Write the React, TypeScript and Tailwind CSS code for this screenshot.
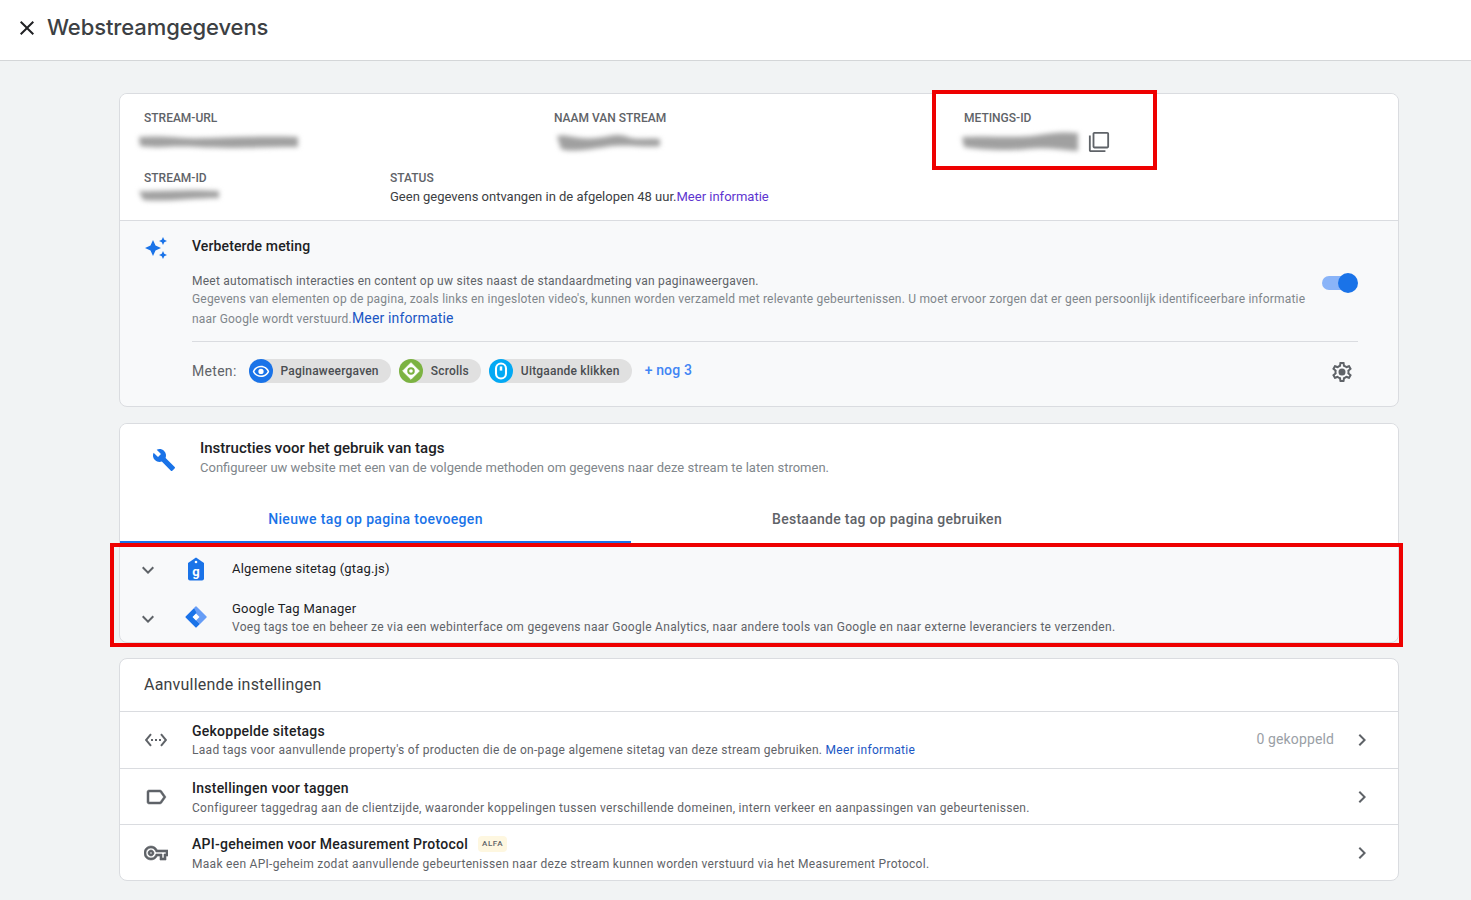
import React from "react";

const P = ({ d, className }: { d: string; className?: string }) => (
  <svg viewBox="0 0 24 24" className={className} fill="currentColor"><path d={d} /></svg>
);

const ICON = {
  close: "M19 6.41L17.59 5 12 10.59 6.41 5 5 6.41 10.59 12 5 17.59 6.41 19 12 13.41 17.59 19 19 17.59 13.41 12z",
  copy: "M3 5H1v16c0 1.1.9 2 2 2h16v-2H3V5zm18-4H7c-1.1 0-2 .9-2 2v14c0 1.1.9 2 2 2h14c1.1 0 2-.9 2-2V3c0-1.1-.9-2-2-2zm0 16H7V3h14v14z",
  wrench: "M22.7 19l-9.1-9.1c.9-2.3.4-5-1.5-6.9-2-2-5-2.4-7.4-1.3L9 6 6 9 1.6 4.7C.4 7.1.9 10.1 2.9 12.1c1.9 1.9 4.6 2.4 6.9 1.5l9.1 9.1c.4.4 1 .4 1.4 0l2.3-2.3c.5-.4.5-1.1.1-1.4z",
  sparkle: "M19 9l1.25-2.75L23 5l-2.75-1.25L19 1l-1.25 2.75L15 5l2.75 1.25L19 9zm-7.5.5L9 4 6.5 9.5 1 12l5.5 2.5L9 20l2.5-5.5L17 12l-5.5-2.5zM19 15l-1.25 2.75L15 19l2.75 1.25L19 23l1.25-2.75L23 19l-2.75-1.25L19 15z",
  gear: "M19.43 12.98c.04-.32.07-.64.07-.98 0-.34-.03-.66-.07-.98l2.11-1.65c.19-.15.24-.42.12-.64l-2-3.46c-.09-.16-.26-.25-.44-.25-.06 0-.12.01-.17.03l-2.49 1c-.52-.4-1.08-.73-1.69-.98l-.38-2.65C14.46 2.18 14.25 2 14 2h-4c-.25 0-.46.18-.49.42l-.38 2.65c-.61.25-1.17.59-1.69.98l-2.49-1c-.06-.02-.12-.03-.18-.03-.17 0-.34.09-.43.25l-2 3.46c-.13.22-.07.49.12.64l2.11 1.65c-.04.32-.07.65-.07.98 0 .33.03.66.07.98l-2.11 1.65c-.19.15-.24.42-.12.64l2 3.46c.09.16.26.25.44.25.06 0 .12-.01.17-.03l2.49-1c.52.4 1.08.73 1.69.98l.38 2.65c.03.24.24.42.49.42h4c.25 0 .46-.18.49-.42l.38-2.65c.61-.25 1.17-.59 1.69-.98l2.49 1c.06.02.12.03.18.03.17 0 .34-.09.43-.25l2-3.46c.12-.22.07-.49-.12-.64l-2.11-1.65zm-1.98-1.71c.04.31.05.52.05.73 0 .21-.02.43-.05.73l-.14 1.13.89.7 1.08.84-.7 1.21-1.27-.51-1.04-.42-.9.68c-.43.32-.84.56-1.25.73l-1.06.43-.16 1.13-.2 1.35h-1.4l-.19-1.35-.16-1.13-1.06-.43c-.43-.18-.83-.41-1.23-.71l-.91-.7-1.06.43-1.27.51-.7-1.21 1.08-.84.89-.7-.14-1.13c-.03-.31-.05-.54-.05-.74s.02-.43.05-.73l.14-1.13-.89-.7-1.08-.84.7-1.21 1.27.51 1.04.42.9-.68c.43-.32.84-.56 1.25-.73l1.06-.43.16-1.13.2-1.35h1.39l.19 1.35.16 1.13 1.06.43c.43.18.83.41 1.23.71l.91.7 1.06-.43 1.27-.51.7 1.21-1.07.85-.89.7.14 1.13zM12 8.500A3.500 3.500 0 1 0 12 15.500A3.500 3.500 0 0 0 12 8.500z",
  code: "M7.77 6.76L6.23 5.48.82 12l5.41 6.52 1.54-1.28L3.42 12l4.35-5.24zM7 13h2v-2H7v2zm10-2h-2v2h2v-2zm-6 2h2v-2h-2v2zm6.77-7.52l-1.54 1.28L20.58 12l-4.35 5.24 1.54 1.28L23.18 12l-5.41-6.52z",
  label: "M17.63 5.84C17.27 5.33 16.67 5 16 5L5 5.01C3.9 5.01 3 5.9 3 7v10c0 1.1.9 1.99 2 1.99L16 19c.67 0 1.27-.33 1.63-.84L22 12l-4.37-6.16zM16 17H5V7h11l3.55 5L16 17z",
  key: "M22 19h-6v-4h-2.68c-1.14 2.42-3.6 4-6.32 4-3.86 0-7-3.14-7-7s3.14-7 7-7c2.72 0 5.17 1.58 6.32 4H24v6h-2v4zm-4-2h2v-4h2v-2H11.94l-.23-.67C11.01 8.34 9.11 7 7 7c-2.76 0-5 2.24-5 5s2.24 5 5 5c2.11 0 4.01-1.34 4.71-3.33l.23-.67H18v4zM7 15c-1.65 0-3-1.35-3-3s1.35-3 3-3 3 1.35 3 3-1.35 3-3 3zm0-4c-.55 0-1 .45-1 1s.45 1 1 1 1-.45 1-1-.45-1-1-1z",
  down: "M16.59 8.59L12 13.17 7.41 8.59 6 10l6 6 6-6z",
  right: "M10 6L8.59 7.41 13.17 12l-4.58 4.59L10 18l6-6z",
};

const Smudge = ({ width, height, d, className }: { width: number; height: number; d: string; className: string }) => (
  <svg width={width} height={height} viewBox={`0 0 ${width} ${height}`} className={`overflow-visible blur-[2.5px] ${className}`} fill="#a0a0a0"><path d={d} /></svg>
);

const Label = ({ children }: { children: React.ReactNode }) => (
  <div className="text-[12px] leading-[16px] font-medium text-[#5f6368]">{children}</div>
);

const Chip = ({ color, icon, text }: { color: string; icon: React.ReactNode; text: string }) => (
  <div className="flex items-center h-6 rounded-full bg-[#e0e0e0] pr-3">
    <div className={`w-6 h-6 rounded-full ${color} flex items-center justify-center`}>{icon}</div>
    <span className="ml-2 text-[12px] font-medium text-[#4a4d51] tracking-[0.2px]">{text}</span>
  </div>
);

const Row = ({ icon, title, badge, desc, link, right, h = "h-[56px]", bodyMt = "mt-[2px]", descMt = "mt-[2px]", iconClass = "" }: { icon: string; title: string; badge?: string; desc: string; link?: string; right?: string; h?: string; bodyMt?: string; descMt?: string; iconClass?: string }) => (
  <div className={`flex items-center ${h} border-t border-[#dadce0]`}>
    <div className="w-[72px] pl-6 flex shrink-0"><P d={icon} className={`w-6 h-6 text-[#5f6368] ${iconClass}`} /></div>
    <div className={`flex-1 min-w-0 ${bodyMt}`}>
      <div className="flex items-center h-[18px]">
        <span className="text-[14px] font-medium leading-[18px] tracking-[0.25px] text-[#202124]">{title}</span>
        {badge && <span className="ml-[10px] px-1 h-[16px] flex items-center bg-[#fef7e0] rounded-sm text-[8px] tracking-[0.6px] text-[#5f6368] font-medium">{badge}</span>}
      </div>
      <div className={`text-[12px] leading-[18px] ${descMt} tracking-[0.295px] text-[#5f6368]`}>
        {desc}
        {link && <span className="text-[#1a56c4]"> {link}</span>}
      </div>
    </div>
    {right && <span className="text-[14px] text-[#9aa0a6] mr-4 mb-[1px] tracking-[0.12px]">{right}</span>}
    <div className="w-[48px] shrink-0"><P d={ICON.right} className="w-6 h-6 text-[#5f6368]" /></div>
  </div>
);

export default function App() {
  return (
    <div className="relative w-[1471px] h-[900px] overflow-hidden bg-[#f1f3f4] font-['Roboto',sans-serif]">
      <header className="h-[61px] bg-white border-b border-[#d4d6d8] flex items-center pl-[15px]">
        <P d={ICON.close} className="w-6 h-6 mb-[4px] text-[#202124]" />
        <h1 className="ml-2 text-[22px] font-['Inter',sans-serif] font-medium text-[#3c4043] tracking-[-0.1px] mb-[5px]">Webstreamgegevens</h1>
      </header>

      <main className="w-[1280px] ml-[119px] mt-8 flex flex-col">
        <section className="h-[314px] rounded-lg border border-[#dadce0] bg-[#f8f9fa] overflow-hidden">
          <div className="h-[127px] bg-white border-b border-[#dadce0] px-6 pt-4">
            <div className="grid grid-cols-[410px_410px_1fr] h-[60px]">
              <div>
                <Label>STREAM-URL</Label>
                <div className="flex items-center h-6 mt-1">
                  <Smudge width={162} height={12} className="-ml-[6px]" d="M1 1C30 -1 40 3 70 2S130 0 160 1V11C120 11 90 13 60 11S20 13 2 10Z" />
                </div>
              </div>
              <div>
                <Label>NAAM VAN STREAM</Label>
                <div className="flex items-center h-6 mt-1">
                  <Smudge width={106} height={16} className="ml-[2px]" d="M1 2C12 0 22 6 40 4S60 -1 72 3 92 3 104 5V12C90 14 70 10 50 13S14 18 5 15Z" />
                </div>
              </div>
              <div>
                <Label>METINGS-ID</Label>
                <div className="flex items-center h-6 mt-1">
                  <Smudge width={118} height={16} className="-ml-[3px]" d="M1 3C30 1 50 5 78 1S106 -1 117 -1V17C100 16 86 13 66 15S20 16 3 13Z" />
                  <P d={ICON.copy} className="ml-[9px] w-[22px] h-[22px] text-[#5f6368]" />
                </div>
              </div>
            </div>
            <div className="flex">
              <div className="w-[246px]">
                <Label>STREAM-ID</Label>
                <div className="mt-[5px] -ml-[6px]">
                  <Smudge width={82} height={9} className="block" d="M1 0C22 1 46 -2 81 0V7C54 7 30 11 5 9Z" />
                </div>
              </div>
              <div>
                <Label>STATUS</Label>
                <div className="mt-0.5 text-[13px] leading-[18px] text-[#3c4043]">
                  Geen gegevens ontvangen in de afgelopen 48 uur.<span className="text-[#5e35d0]">Meer informatie</span>
                </div>
              </div>
            </div>
          </div>
          <div className="flex pl-6 pr-10 pt-[15px]">
            <P d={ICON.sparkle} className="w-6 h-6 text-[#1a73e8]" />
            <div className="ml-6 flex-1">
              <div className="text-[14px] leading-[20px] font-medium text-[#202124] tracking-[0.13px]">Verbeterde meting</div>
              <div className="flex items-start mt-[17px] pb-[12px] border-b border-[#dadce0]">
                <div className="w-[1126px] text-[12px] text-[#80868b] tracking-[0.195px]">
                  <div className="leading-[16px] text-[#5f6368] tracking-[0.24px]">Meet automatisch interacties en content op uw sites naast de standaardmeting van paginaweergaven.</div>
                  <div className="leading-[20px] whitespace-nowrap">Gegevens van elementen op de pagina, zoals links en ingesloten video's, kunnen worden verzameld met relevante gebeurtenissen. U moet ervoor zorgen dat er geen persoonlijk identificeerbare informatie</div>
                  <div className="h-[20px] leading-[18px]">naar Google wordt verstuurd.<span className="text-[14px] text-[#1a56c4] tracking-[0.15px]">Meer informatie</span></div>
                </div>
                <div className="relative ml-auto w-[36px] h-[20px]">
                  <div className="absolute left-0 top-[3px] w-[32px] h-[14px] rounded-full bg-[#8ab4f8]" />
                  <div className="absolute right-0 top-0 w-5 h-5 rounded-full bg-[#1a73e8]" />
                </div>
              </div>
              <div className="flex items-center h-[58px]">
                <span className="text-[14px] text-[#5f6368] tracking-[0.3px] mr-3">Meten:</span>
                <div className="flex items-center gap-2">
                  <Chip color="bg-[#1a73e8]" text="Paginaweergaven" icon={
                    <svg viewBox="0 0 24 24" className="w-[18px] h-[18px]" fill="white"><path d="M12 5C7 5 2.730 8.110 1 12.500 2.730 16.890 7 20 12 20s9.270-3.110 11-7.500C21.270 8.110 17 5 12 5zm0 13c-3.790 0-7.170-2.130-8.820-5.500C4.830 9.130 8.210 7 12 7s7.170 2.130 8.820 5.500C19.170 15.870 15.790 18 12 18zm0-9a3.500 3.500 0 1 0 0 7 3.500 3.500 0 0 0 0-7z" /></svg>
                  } />
                  <Chip color="bg-[#7cb342]" text="Scrolls" icon={
                    <svg viewBox="0 0 24 24" className="w-[20px] h-[20px]"><path d="M12 2L22 12 12 22 2 12z" fill="white" stroke="white" strokeLinejoin="round" /><circle cx="12" cy="12" r="4.500" fill="#7cb342" /><circle cx="12" cy="12" r="2.200" fill="white" /></svg>
                  } />
                  <Chip color="bg-[#03a9f4]" text="Uitgaande klikken" icon={
                    <svg viewBox="0 0 24 24" className="w-[20px] h-[20px]" fill="none" stroke="white" strokeWidth="2.500"><rect x="6" y="3" width="12" height="18" rx="6" /><path d="M12 6.500v5" strokeWidth="3" /></svg>
                  } />
                  <span className="ml-[5px] mb-[1px] text-[14px] font-medium text-[#4285f4] tracking-[0.15px]">+ nog 3</span>
                </div>
                <P d={ICON.gear} className="ml-auto mr-[4px] mt-[2px] w-6 h-6 text-[#5f6368]" />
              </div>
            </div>
          </div>
        </section>

        <section className="mt-4 h-[220px] rounded-lg border border-[#dadce0] bg-[#f8f9fa] overflow-hidden">
          <div className="bg-white h-[119px]">
            <div className="flex pl-8 pt-[14px] h-[76px]">
              <P d={ICON.wrench} className="w-6 h-6 mt-[10px] text-[#1a73e8]" />
              <div className="ml-6">
                <div className="text-[15px] leading-[20px] font-medium text-[#202124]">Instructies voor het gebruik van tags</div>
                <div className="text-[13px] leading-[18px] mt-[1px] text-[#80868b]">Configureer uw website met een van de volgende methoden om gegevens naar deze stream te laten stromen.</div>
              </div>
            </div>
            <div className="flex h-[43px] font-medium text-[14px]">
              <div className="w-[511px] h-[43px] pb-[2px] border-b-2 border-[#1a73e8] text-[#1a73e8] flex items-center justify-center tracking-[0.35px]">Nieuwe tag op pagina toevoegen</div>
              <div className="w-[512px] h-[43px] pb-[5px] text-[#5f6368] flex items-center justify-center tracking-[0.28px]">Bestaande tag op pagina gebruiken</div>
            </div>
          </div>
          <div className="flex items-center h-[52px] pl-4">
            <P d={ICON.down} className="w-6 h-6 mt-[2px] text-[#5f6368]" />
            <svg viewBox="0 0 24 24" className="ml-[24px] w-6 h-6 mb-[1px]" fill="#1a73e8">
              <path d="M12 0.500L20 6V21.500A2 2 0 0 1 18 23.500H6A2 2 0 0 1 4 21.500V6z" />
              <circle cx="12" cy="5" r="1.300" fill="white" />
              <text x="12" y="18.500" textAnchor="middle" fontSize="13" fontWeight="700" fill="white" fontFamily="Roboto, sans-serif">g</text>
            </svg>
            <span className="ml-6 text-[13px] text-[#202124] tracking-[0.2px]">Algemene sitetag (gtag.js)</span>
          </div>
          <div className="flex items-center h-[47px] pl-4">
            <P d={ICON.down} className="w-6 h-6 text-[#5f6368]" />
            <svg viewBox="0 0 24 24" className="ml-[24px] w-6 h-6 mb-[4px]">
              <path d="M12 2L22 12 12 22 2 12z" fill="#669df6" stroke="#669df6" strokeWidth="1.500" strokeLinejoin="round" />
              <path d="M2 12L12 22 15 19 8 12 12 8 10 4z" fill="#1a73e8" stroke="#1a73e8" strokeWidth="1" strokeLinejoin="round" />
              <path d="M12 8.500l3.500 3.500-3.500 3.500L8.500 12z" fill="white" />
            </svg>
            <div className="ml-6 mb-[2px]">
              <div className="text-[13px] leading-[18px] text-[#202124] tracking-[0.25px]">Google Tag Manager</div>
              <div className="text-[12px] leading-[18px] text-[#5f6368] tracking-[0.29px]">Voeg tags toe en beheer ze via een webinterface om gegevens naar Google Analytics, naar andere tools van Google en naar externe leveranciers te verzenden.</div>
            </div>
          </div>
        </section>

        <section className="mt-[15px] h-[223px] rounded-lg border border-[#dadce0] bg-white overflow-hidden">
          <div className="h-[52px] pl-6 flex items-center text-[16px] text-[#3c4043] tracking-[0.2px]">Aanvullende instellingen</div>
          <Row h="h-[57px]" bodyMt="mt-[1px]" descMt="mt-[1px]" icon={ICON.code} title="Gekoppelde sitetags" desc="Laad tags voor aanvullende property's of producten die de on-page algemene sitetag van deze stream gebruiken." link="Meer informatie" right="0 gekoppeld" />
          <Row icon={ICON.label} iconClass="stroke-current stroke-[0.5]" title="Instellingen voor taggen" desc="Configureer taggedrag aan de clientzijde, waaronder koppelingen tussen verschillende domeinen, intern verkeer en aanpassingen van gebeurtenissen." />
          <Row icon={ICON.key} iconClass="stroke-current stroke-[0.6]" title="API-geheimen voor Measurement Protocol" badge="ALFA" desc="Maak een API-geheim zodat aanvullende gebeurtenissen naar deze stream kunnen worden verstuurd via het Measurement Protocol." />
        </section>
      </main>

      <div className="absolute left-[932px] top-[90px] w-[225px] h-[80px] border-[4px] border-[#ee0000] pointer-events-none" />
      <div className="absolute left-[110px] top-[543px] w-[1293px] h-[104px] border-[4px] border-[#ee0000] pointer-events-none" />
    </div>
  );
}
